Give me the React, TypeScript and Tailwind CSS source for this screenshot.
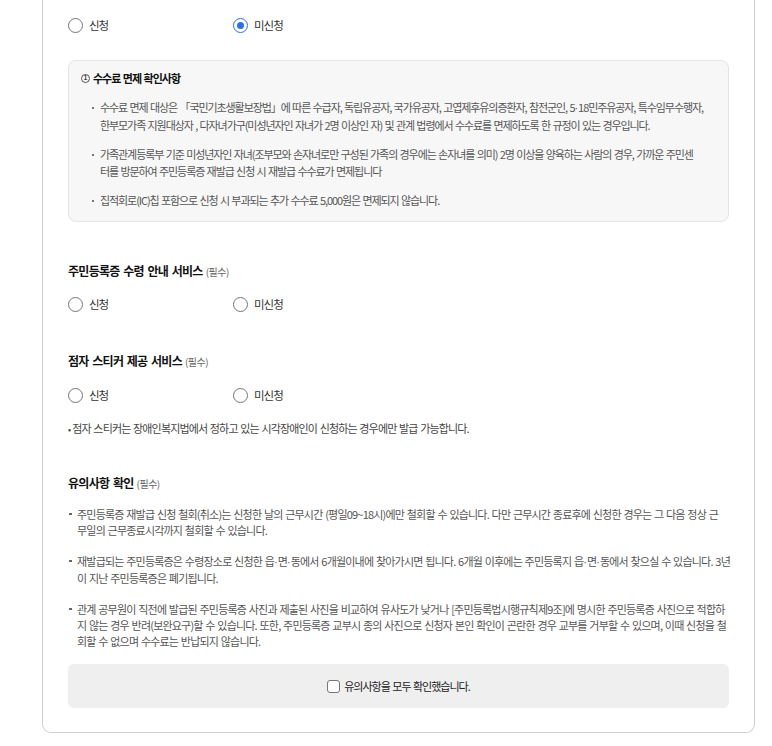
import React from "react";

const FONT = { fontFamily: '"Noto Sans CJK KR", "Noto Sans", sans-serif' };

function fix(text: string): React.ReactNode[] {
  const parts = text.split(/(·)/);
  return parts.map((p, i) => {
    if (p === "·") {
      return (
        <span key={i} className="font-['Liberation_Sans'] tracking-normal">
          ·
        </span>
      );
    }
    return <React.Fragment key={i}>{p}</React.Fragment>;
  });
}

function Radio({ label, checked }: { label: string; checked?: boolean }) {
  return (
    <div className="flex items-center w-[165px] h-[20px]">
      {checked ? (
        <span className="w-[15px] h-[15px] rounded-full border-[1.5px] border-[#2f6fe4] flex items-center justify-center">
          <span className="w-[7px] h-[7px] rounded-full bg-[#2f6fe4]" />
        </span>
      ) : (
        <span className="w-[15px] h-[15px] rounded-full border-[1.5px] border-[#767676] bg-white" />
      )}
      <span className="ml-[6px] text-[11.5px] text-[#333] tracking-[-1px] leading-[20px]">{label}</span>
    </div>
  );
}

function Header({ title }: { title: string }) {
  return (
    <div className="h-[18px] leading-[18px] flex items-baseline">
      <span className="text-[12px] font-bold text-[#111] tracking-[-0.7px] [word-spacing:1.5px]">{title}</span>
      <span className="ml-[3px] text-[10px] text-[#666] tracking-[-0.5px]">(필수)</span>
    </div>
  );
}

function InfoItem({ lines }: { lines: string[] }) {
  return (
    <div className="flex">
      <span className="w-[8px] h-[17px] flex items-center shrink-0">
        <span className="w-[2px] h-[2px] bg-[#777]" />
      </span>
      <div>
        {lines.map((l, i) => (
          <div key={i} className="whitespace-nowrap leading-[17px]">
            {fix(l)}
          </div>
        ))}
      </div>
    </div>
  );
}

function NoticeItem({ lines }: { lines: string[] }) {
  return (
    <div className="flex">
      <span className="w-[8px] h-[16px] flex items-center shrink-0">
        <span className="w-[2.5px] h-[2.5px] bg-[#666]" />
      </span>
      <div>
        {lines.map((l, i) => (
          <div key={i} className="whitespace-nowrap leading-[16px]">
            {fix(l)}
          </div>
        ))}
      </div>
    </div>
  );
}

export default function App() {
  return (
    <div className="min-h-[746px] bg-white pl-[42px]" style={FONT}>
      <div className="w-[713px] border-x border-b border-[#cfcfcf] rounded-b-[9px] px-[25px] pt-[15px] pb-[24px]">
        <div className="flex">
          <Radio label="신청" />
          <Radio label="미신청" checked />
        </div>

        <div className="mt-[25px] rounded-[8px] border border-[#e4e4e4] bg-[#f7f7f7] pl-[12px] pt-[9px] pb-[12px]">
          <div className="flex items-center h-[16px]">
            <span className="w-[9px] h-[9px] rounded-full border border-[#555] flex items-center justify-center text-[6px] leading-none text-[#333] font-bold">
              1
            </span>
            <span className="ml-[3px] text-[11px] font-bold text-[#111] tracking-[-1px] [word-spacing:1px]">
              수수료 면제 확인사항
            </span>
          </div>
          <div className="mt-[13px] pl-[11px] flex flex-col gap-[12px] text-[11px] text-[#555] tracking-[-1.08px] [word-spacing:1px]">
            <InfoItem
              lines={[
                "수수료 면제 대상은 「국민기초생활보장법」에 따른 수급자, 독립유공자, 국가유공자, 고엽제후유의증환자, 참전군인, 5·18민주유공자, 특수임무수행자,",
                "한부모가족 지원대상자 , 다자녀가구(미성년자인 자녀가 2명 이상인 자) 및 관계 법령에서 수수료를 면제하도록 한 규정이 있는 경우입니다.",
              ]}
            />
            <InfoItem
              lines={[
                "가족관계등록부 기준 미성년자인 자녀(조부모와 손자녀로만 구성된 가족의 경우에는 손자녀를 의미) 2명 이상을 양육하는 사람의 경우, 가까운 주민센",
                "터를 방문하여 주민등록증 재발급 신청 시 재발급 수수료가 면제됩니다",
              ]}
            />
            <InfoItem lines={["집적회로(IC)칩 포함으로 신청 시 부과되는 추가 수수료 5,000원은 면제되지 않습니다."]} />
          </div>
        </div>

        <div className="mt-[40px]">
          <Header title="주민등록증 수령 안내 서비스" />
        </div>
        <div className="mt-[14px] flex">
          <Radio label="신청" />
          <Radio label="미신청" />
        </div>

        <div className="mt-[38px]">
          <Header title="점자 스티커 제공 서비스" />
        </div>
        <div className="mt-[15px] flex">
          <Radio label="신청" />
          <Radio label="미신청" />
        </div>
        <div className="mt-[15px] leading-[16px] text-[11px] text-[#444] tracking-[-0.85px] [word-spacing:1px] whitespace-nowrap">
          <span className="text-[9px] mr-[2px]">•</span>점자 스티커는 장애인복지법에서 정하고 있는 시각장애인이 신청하는 경우에만 발급 가능합니다.
        </div>

        <div className="mt-[36px]">
          <Header title="유의사항 확인" />
        </div>
        <div className="mt-[14px] pl-[1px] flex flex-col gap-[15px] text-[11px] text-[#555] tracking-[-0.8px] [word-spacing:1px]">
          <NoticeItem
            lines={[
              "주민등록증 재발급 신청 철회(취소)는 신청한 날의 근무시간 (평일09~18시)에만 철회할 수 있습니다. 다만 근무시간 종료후에 신청한 경우는 그 다음 정상 근",
              "무일의 근무종료시각까지 철회할 수 있습니다.",
            ]}
          />
          <NoticeItem
            lines={[
              "재발급되는 주민등록증은 수령장소로 신청한 읍·면·동에서 6개월이내에 찾아가시면 됩니다. 6개월 이후에는 주민등록지 읍·면·동에서 찾으실 수 있습니다. 3년",
              "이 지난 주민등록증은 폐기됩니다.",
            ]}
          />
          <NoticeItem
            lines={[
              "관계 공무원이 직전에 발급된 주민등록증 사진과 제출된 사진을 비교하여 유사도가 낮거나 [주민등록법시행규칙제9조]에 명시한 주민등록증 사진으로 적합하",
              "지 않는 경우 반려(보완요구)할 수 있습니다. 또한, 주민등록증 교부시 종의 사진으로 신청자 본인 확인이 곤란한 경우 교부를 거부할 수 있으며, 이때 신청을 철",
              "회할 수 없으며 수수료는 반납되지 않습니다.",
            ]}
          />
        </div>

        <div className="mt-[15px] h-[44px] rounded-[6px] bg-[#efefef] flex items-center justify-center">
          <span className="w-[13px] h-[13px] rounded-[3px] border border-[#767676] bg-white" />
          <span className="ml-[4px] text-[11px] text-[#222] tracking-[-1px] [word-spacing:1px]">
            유의사항을 모두 확인했습니다.
          </span>
        </div>
      </div>
    </div>
  );
}
